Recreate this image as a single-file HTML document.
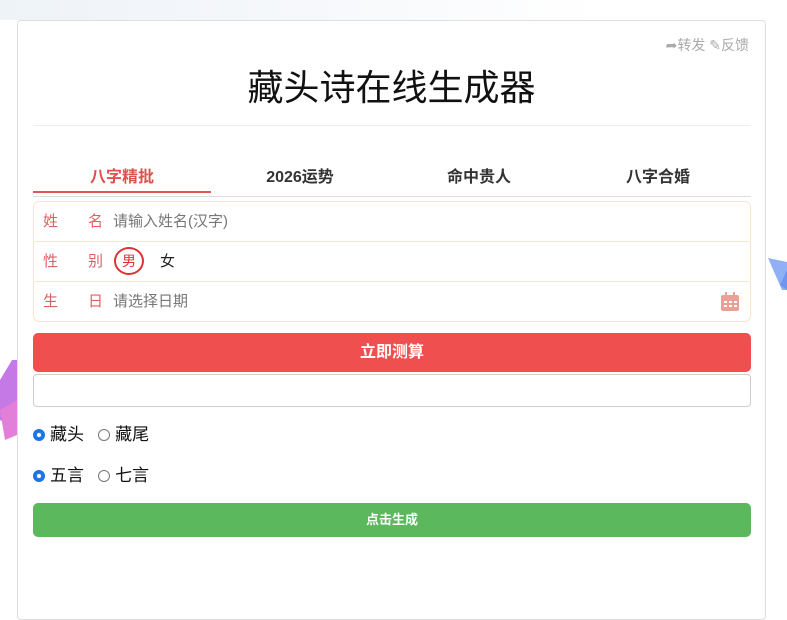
<!DOCTYPE html>
<html><head><meta charset="utf-8"><style>
*{margin:0;padding:0;box-sizing:border-box}
body{width:787px;height:567px;overflow:hidden;background:#fff;font-family:"Liberation Sans","Noto Sans CJK SC",sans-serif;position:relative}
.bgtop{position:absolute;left:0;top:0;width:600px;height:20px;background:linear-gradient(90deg,#eef3f8,#f6f8fb,#fff)}
.card{position:absolute;left:17px;top:20px;width:749px;height:600px;border:1px solid #ddd;border-radius:4px;background:#fff}
.abs{position:absolute}
.tools{right:16px;top:14px;font-size:14px;color:#aaa}
h1{position:absolute;left:0;width:100%;top:38px;text-align:center;font-size:36px;font-weight:normal;color:#111}
.hr{left:15px;width:718px;top:104px;height:1px;background:#eee}
.tab{top:142px;width:178px;text-align:center;font-size:16px;font-weight:bold;color:#333}
.form{left:15px;top:180px;width:718px;height:121px;border:1px solid #fbe3cc;border-radius:6px}
.row{position:absolute;left:0;width:100%;height:40px;border-bottom:1px solid #fbe6d2;font-size:15px}
.lab{position:absolute;left:9px;top:8px;color:#e06060}
.lab2{position:absolute;left:54px;top:8px;color:#e06060}
.btn{left:15px;width:718px;color:#fff;text-align:center;border-radius:5px}
.radio{display:inline-block;width:12px;height:12px;border-radius:50%;border:1px solid #777;vertical-align:-1px;margin-right:5px}
.radio.on{border:3px solid #1a73e8;background:#fff;box-shadow:0 0 0 1px #1a73e8 inset}
.rl{left:15px;font-size:17px;color:#111}
</style></head><body>
<div class="bgtop"></div>
<svg class="abs" style="left:0;top:0" width="787" height="567">
<polygon points="768,258 787,262 787,290 782,290" fill="#8fb0f5"/>
<polygon points="787,270 787,290 780,285" fill="#6f95ee"/>
<polygon points="0,380 12,360 17,360 17,430 0,420" fill="#c479e6"/>
<polygon points="0,410 17,400 17,435 5,440" fill="#e27fd8"/>
</svg>
<div class="card">
 <div class="abs tools">➦转发 ✎反馈</div>
 <h1>藏头诗在线生成器</h1>
 <div class="abs hr"></div>
 <div class="abs tab" style="left:15px;color:#e05050">八字精批</div>
 <div class="abs tab" style="left:193px">2026运势</div>
 <div class="abs tab" style="left:372px">命中贵人</div>
 <div class="abs tab" style="left:551px">八字合婚</div>
 <div class="abs" style="left:15px;top:170px;width:178px;height:2px;background:#e05555"></div>
 <div class="abs" style="left:15px;top:175px;width:718px;height:1px;background:#ddd"></div>
 <div class="abs form">
  <div class="row" style="top:0"><span class="lab">姓</span><span class="lab2">名</span><span class="abs" style="left:79px;top:8px;color:#777">请输入姓名(汉字)</span></div>
  <div class="row" style="top:40px"><span class="lab">性</span><span class="lab2">别</span><span class="abs" style="left:80px;top:5px;width:30px;height:28px;border:2px solid #d33;border-radius:50%;color:#d33;text-align:center;line-height:24px;font-size:14px">男</span><span class="abs" style="left:126px;top:8px;color:#222">女</span></div>
  <div class="row" style="top:80px;border:none"><span class="lab">生</span><span class="lab2">日</span><span class="abs" style="left:79px;top:8px;color:#777">请选择日期</span>
  <svg class="abs" style="left:686px;top:10px" width="20" height="20"><rect x="1" y="3" width="18" height="16" rx="2" fill="#eba096"/><rect x="5" y="0" width="2" height="5" fill="#eba096"/><rect x="13" y="0" width="2" height="5" fill="#eba096"/><g fill="#fff"><rect x="4" y="9" width="3" height="2"/><rect x="9" y="9" width="3" height="2"/><rect x="14" y="9" width="3" height="2"/><rect x="4" y="13" width="3" height="2"/><rect x="9" y="13" width="3" height="2"/><rect x="14" y="13" width="3" height="2"/></g></svg></div>
 </div>
 <div class="abs btn" style="top:312px;height:39px;background:#ef4f4f;line-height:39px;font-size:16px;font-weight:bold">立即测算</div>
 <div class="abs" style="left:15px;top:353px;width:718px;height:33px;border:1px solid #ccc;border-radius:4px"></div>
 <div class="abs rl" style="top:399px"><span class="radio on"></span>藏头&nbsp;&nbsp;&nbsp;<span class="radio"></span>藏尾</div>
 <div class="abs rl" style="top:440px"><span class="radio on"></span>五言&nbsp;&nbsp;&nbsp;<span class="radio"></span>七言</div>
 <div class="abs btn" style="top:482px;height:34px;background:#5cb85c;line-height:34px;font-size:13px;font-weight:bold">点击生成</div>
</div>
</body></html>
